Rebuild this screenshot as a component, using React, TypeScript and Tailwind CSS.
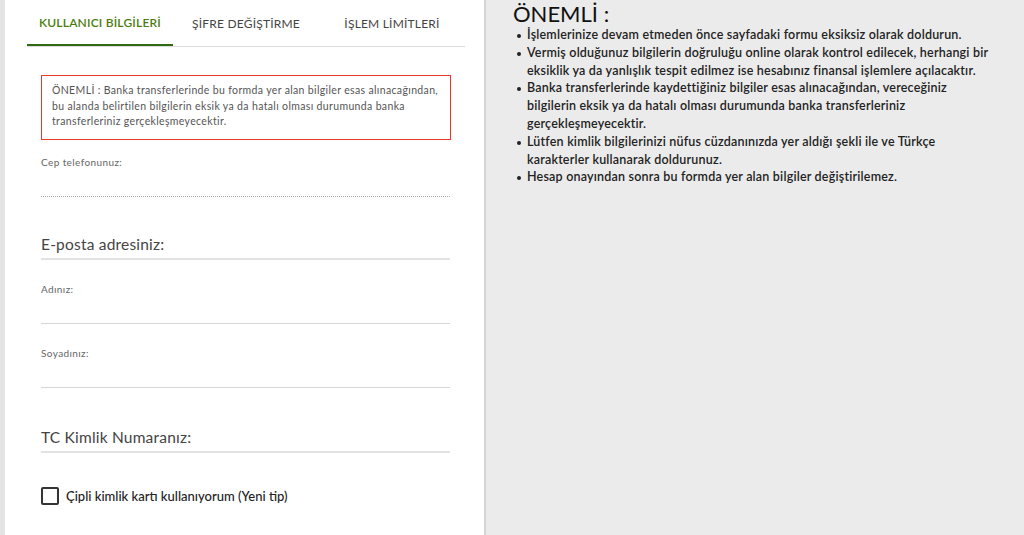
import { useState } from 'react'
import clsx from 'clsx'

const TABS = ['KULLANICI BİLGİLERİ', 'ŞİFRE DEĞİŞTİRME', 'İŞLEM LİMİTLERİ']

// each note split into the lines the original shows
const NOTES = [
  ['İşlemlerinize devam etmeden önce sayfadaki formu eksiksiz olarak doldurun.'],
  [
    'Vermiş olduğunuz bilgilerin doğruluğu online olarak kontrol edilecek, herhangi bir',
    'eksiklik ya da yanlışlık tespit edilmez ise hesabınız finansal işlemlere açılacaktır.',
  ],
  [
    'Banka transferlerinde kaydettiğiniz bilgiler esas alınacağından, vereceğiniz',
    'bilgilerin eksik ya da hatalı olması durumunda banka transferleriniz',
    'gerçekleşmeyecektir.',
  ],
  [
    'Lütfen kimlik bilgilerinizi nüfus cüzdanınızda yer aldığı şekli ile ve Türkçe',
    'karakterler kullanarak doldurunuz.',
  ],
  ['Hesap onayından sonra bu formda yer alan bilgiler değiştirilemez.'],
]

// small label above the line (Adınız, Soyadınız ...)
function SmallField({ label, dotted }: { label: string; dotted?: boolean }) {
  return (
    <div className="pt-[13px]">
      <div className="text-[10px] leading-[14px] tracking-[0.4px] text-[#666]">{label}</div>
      <div
        className={clsx(
          'mt-[27px] h-[1px] w-[409px]',
          dotted ? 'border-t border-dotted border-[#aaa]' : 'bg-[#d6d6d6]'
        )}
      />
    </div>
  )
}

// big placeholder-like label sitting on the line
function BigField({ label }: { label: string }) {
  return (
    <div className="pt-[40px]">
      <div className="text-[15.5px] leading-[20px] tracking-[0.2px] text-[#444]">{label}</div>
      <div className="mt-[4px] h-[2px] w-[409px] bg-[#e2e2e2]" />
    </div>
  )
}

export default function App() {
  const [tab, setTab] = useState(0)
  const [chip, setChip] = useState(false)

  return (
    <div className="flex h-[535px] w-[1024px] overflow-hidden font-['Lato',sans-serif]">
      <div className="w-[5px] bg-[#e4e4e4]" />

      <div className="w-[481px] border-r-2 border-[#d4d4d4] bg-white">
        {/* tabs */}
        <div className="ml-[22px] flex w-[438px] border-b border-[#dcdcdc]">
          {TABS.map((t, i) => (
            <button
              key={t}
              onClick={() => setTab(i)}
              className={clsx(
                'flex h-[46px] w-[146px] items-center justify-center pt-[2px] text-[12px] tracking-[0.2px]',
                i === tab
                  ? 'mb-[-1px] border-b-2 border-[#2f6b10] font-semibold text-[#4a7d0d]'
                  : 'text-[#444]'
              )}
            >
              {t}
            </button>
          ))}
        </div>

        <div className="pl-[36px]">
          <div className="mt-[28px] w-[410px] border border-[#f0352a] px-[10px] pb-[9px] pt-[7px] text-[10.5px] leading-[15.5px] tracking-[0.35px] text-[#555]">
            ÖNEMLİ : Banka transferlerinde bu formda yer alan bilgiler esas alınacağından,
            <br />
            bu alanda belirtilen bilgilerin eksik ya da hatalı olması durumunda banka
            <br />
            transferleriniz gerçekleşmeyecektir.
          </div>

          <div className="pt-[2px]">
            <SmallField label="Cep telefonunuz:" dotted />
          </div>
          <div className="-mt-[3px]">
            <BigField label="E-posta adresiniz:" />
          </div>
          <div className="pt-[9px]">
            <SmallField label="Adınız:" />
          </div>
          <div className="pt-[9px]">
            <SmallField label="Soyadınız:" />
          </div>
          <div className="-mt-[1px]">
            <BigField label="TC Kimlik Numaranız:" />
          </div>

          <label className="mt-[34px] flex cursor-pointer items-center gap-[7px]">
            <input
              type="checkbox"
              checked={chip}
              onChange={(e) => setChip(e.target.checked)}
              className="sr-only"
            />
            <span className="h-[18px] w-[18px] rounded-[2px] border-2 border-[#333]" />
            <span className="text-[13px] font-medium text-[#222]">
              Çipli kimlik kartı kullanıyorum (Yeni tip)
            </span>
          </label>
        </div>
      </div>

      <div className="flex-1 bg-[#ebebeb] pl-[27px] pr-[20px] pt-[1px]">
        <h2 className="text-[22px] leading-[26px] text-[#111]">ÖNEMLİ :</h2>
        <ul className="mt-[-1px] text-[12.5px] font-semibold leading-[17.8px] tracking-[0.2px] text-[#222]">
          {NOTES.map((lines) => (
            <li key={lines[0]} className="flex">
              <span className="ml-[4px] mr-[6px] mt-[8px] h-[4px] w-[4px] shrink-0 rounded-full bg-[#222]" />
              <span>
                {lines.map((l, i) => (
                  <span key={i} className="block">
                    {l}
                  </span>
                ))}
              </span>
            </li>
          ))}
        </ul>
      </div>
    </div>
  )
}
